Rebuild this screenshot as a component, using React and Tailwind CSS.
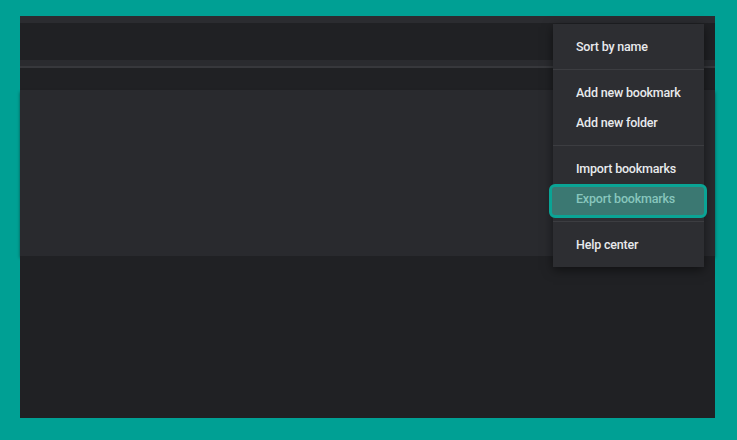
import React from "react";

function Item({ children }) {
  return (
    <div className="h-[30px] flex items-center pt-[2px] pl-[23px] text-[12.5px] tracking-[-0.2px] font-medium text-[#e8eaed] whitespace-nowrap">
      {children}
    </div>
  );
}

function Section({ children }) {
  return <div className="py-[7.5px]">{children}</div>;
}

function Divider() {
  return <div className="h-px bg-[#3c3d41]" />;
}

export default function App() {
  return (
    <div
      className="w-[737px] h-[440px] bg-[#00a094] pt-4 pl-5 pr-[22px] pb-[22px]"
      style={{ fontFamily: "Roboto, 'Liberation Sans', sans-serif" }}
    >
      <div className="relative h-full flex flex-col bg-[#202124]">
        <div className="h-[7px] bg-[#2b2c30]" />
        <div className="h-[37px] bg-[#202124]" />
        <div className="h-[6px] bg-[#2a2b2f]" />
        <div className="h-[2px] bg-[#37383c]" />
        <div className="h-[22px] bg-[#202124]" />
        <div className="h-[166px] bg-[#292a2e] shadow-[0_2px_3px_rgba(0,0,0,0.45)]" />
        <div className="flex-1 bg-[#202124]" />

        <div className="absolute left-[533px] top-[8px] w-[151px] bg-[#2d2e32] shadow-[0_3px_10px_rgba(0,0,0,0.5)]">
          <Section>
            <Item>Sort by name</Item>
          </Section>
          <Divider />
          <Section>
            <Item>Add new bookmark</Item>
            <Item>Add new folder</Item>
          </Section>
          <Divider />
          <Section>
            <Item>Import bookmarks</Item>
            <div className="relative h-[30px]">
              <div className="absolute -left-[4px] -right-[3px] top-0 -bottom-[4px] rounded-[6px] border-[3px] border-[#0aa495] bg-[#3b7872]" />
              <div className="relative h-full flex items-center pt-[2px] pl-[23px] text-[12.5px] tracking-[-0.2px] font-medium text-[#88c6bd] whitespace-nowrap">
                Export bookmarks
              </div>
            </div>
          </Section>
          <Divider />
          <Section>
            <Item>Help center</Item>
          </Section>
        </div>
      </div>
    </div>
  );
}
